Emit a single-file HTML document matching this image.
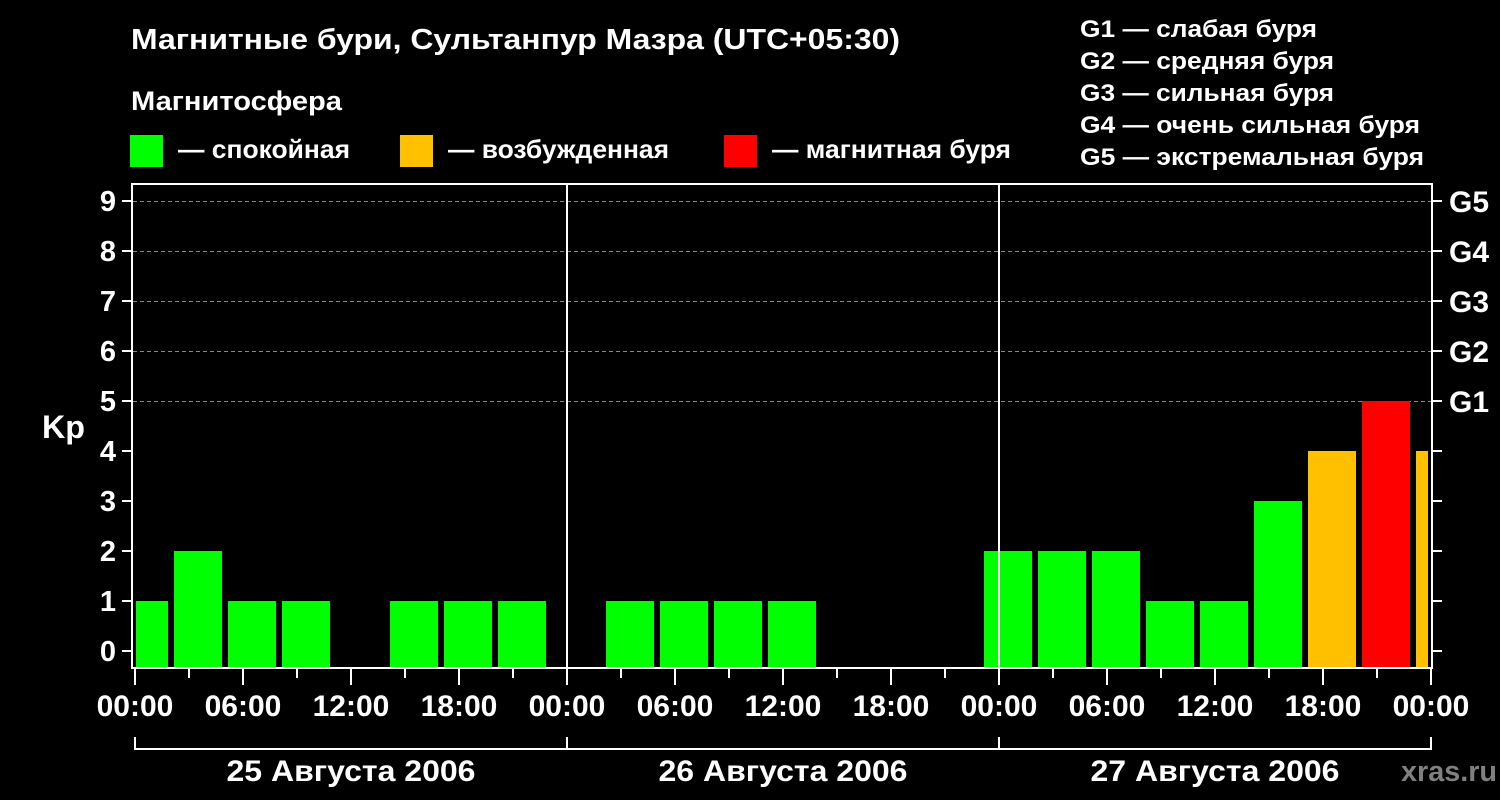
<!DOCTYPE html>
<html><head><meta charset="utf-8"><style>
html,body{margin:0;padding:0;background:#000;}
svg{display:block;}
text{font-family:"Liberation Sans",Arial,sans-serif;font-weight:bold;fill:#fff;}
</style></head><body>
<svg width="1500" height="800" viewBox="0 0 1500 800" xmlns="http://www.w3.org/2000/svg">
<rect width="1500" height="800" fill="#000"/>
<text x="131" y="49" font-size="29" textLength="769" lengthAdjust="spacingAndGlyphs">Магнитные бури, Сультанпур Мазра (UTC+05:30)</text>
<text x="131" y="110" font-size="27" textLength="211" lengthAdjust="spacingAndGlyphs">Магнитосфера</text>
<rect x="130" y="135" width="33" height="32" fill="#00ff00"/>
<text x="178" y="158" font-size="26" textLength="172" lengthAdjust="spacingAndGlyphs">— спокойная</text>
<rect x="400" y="135" width="33" height="32" fill="#ffc000"/>
<text x="448" y="158" font-size="26" textLength="221" lengthAdjust="spacingAndGlyphs">— возбужденная</text>
<rect x="724" y="135" width="33" height="32" fill="#ff0000"/>
<text x="772" y="158" font-size="26" textLength="239" lengthAdjust="spacingAndGlyphs">— магнитная буря</text>
<g font-size="24">
<text x="1080" y="37" textLength="237" lengthAdjust="spacingAndGlyphs">G1 — слабая буря</text>
<text x="1080" y="69" textLength="254" lengthAdjust="spacingAndGlyphs">G2 — средняя буря</text>
<text x="1080" y="101" textLength="254" lengthAdjust="spacingAndGlyphs">G3 — сильная буря</text>
<text x="1080" y="133" textLength="340" lengthAdjust="spacingAndGlyphs">G4 — очень сильная буря</text>
<text x="1080" y="165" textLength="344" lengthAdjust="spacingAndGlyphs">G5 — экстремальная буря</text>
</g>
<g stroke="#888" stroke-width="1" stroke-dasharray="4,3">
<line x1="133" y1="201.5" x2="1431" y2="201.5"/>
<line x1="133" y1="251.5" x2="1431" y2="251.5"/>
<line x1="133" y1="301.5" x2="1431" y2="301.5"/>
<line x1="133" y1="351.5" x2="1431" y2="351.5"/>
<line x1="133" y1="401.5" x2="1431" y2="401.5"/>
</g>
<g fill="#00ff00">
<rect x="136" y="601" width="32" height="67"/>
<rect x="174" y="551" width="48" height="117"/>
<rect x="228" y="601" width="48" height="67"/>
<rect x="282" y="601" width="48" height="67"/>
<rect x="390" y="601" width="48" height="67"/>
<rect x="444" y="601" width="48" height="67"/>
<rect x="498" y="601" width="48" height="67"/>
<rect x="606" y="601" width="48" height="67"/>
<rect x="660" y="601" width="48" height="67"/>
<rect x="714" y="601" width="48" height="67"/>
<rect x="768" y="601" width="48" height="67"/>
<rect x="984" y="551" width="48" height="117"/>
<rect x="1038" y="551" width="48" height="117"/>
<rect x="1092" y="551" width="48" height="117"/>
<rect x="1146" y="601" width="48" height="67"/>
<rect x="1200" y="601" width="48" height="67"/>
<rect x="1254" y="501" width="48" height="167"/>
</g>
<rect x="1308" y="451" width="48" height="217" fill="#ffc000"/>
<rect x="1362" y="401" width="48" height="267" fill="#ff0000"/>
<rect x="1416" y="451" width="12" height="217" fill="#ffc000"/>
<g stroke="#fff" stroke-width="2" fill="none">
<rect x="132" y="184" width="1300" height="484"/>
<line x1="567" y1="184" x2="567" y2="668"/>
<line x1="999" y1="184" x2="999" y2="668"/>
<path d="M122 201H132M122 251H132M122 301H132M122 351H132M122 401H132M122 451H132M122 501H132M122 551H132M122 601H132M122 651H132"/>
<path d="M1432 201H1442M1432 251H1442M1432 301H1442M1432 351H1442M1432 401H1442M1432 451H1442M1432 501H1442M1432 551H1442M1432 601H1442M1432 651H1442"/>
<path d="M135 668V685M189 668V678M243 668V685M297 668V678M351 668V685M405 668V678M459 668V685M513 668V678M567 668V685M621 668V678M675 668V685M729 668V678M783 668V685M837 668V678M891 668V685M945 668V678M999 668V685M1053 668V678M1107 668V685M1161 668V678M1215 668V685M1269 668V678M1323 668V685M1377 668V678M1431 668V685"/>
<path d="M135 737V749H1431V737M567 737V749M999 737V749"/>
</g>
<g font-size="29" text-anchor="end">
<text x="116" y="211">9</text><text x="116" y="261">8</text><text x="116" y="311">7</text><text x="116" y="361">6</text><text x="116" y="411">5</text><text x="116" y="461">4</text><text x="116" y="511">3</text><text x="116" y="561">2</text><text x="116" y="611">1</text><text x="116" y="661">0</text>
</g>
<text x="42" y="438" font-size="32" textLength="43" lengthAdjust="spacingAndGlyphs">Kp</text>
<g font-size="30">
<text x="1449" y="212">G5</text><text x="1449" y="262">G4</text><text x="1449" y="312">G3</text><text x="1449" y="362">G2</text><text x="1449" y="412">G1</text>
</g>
<g font-size="30" text-anchor="middle">
<text x="135" y="716">00:00</text><text x="243" y="716">06:00</text><text x="351" y="716">12:00</text><text x="459" y="716">18:00</text>
<text x="567" y="716">00:00</text><text x="675" y="716">06:00</text><text x="783" y="716">12:00</text><text x="891" y="716">18:00</text>
<text x="999" y="716">00:00</text><text x="1107" y="716">06:00</text><text x="1215" y="716">12:00</text><text x="1323" y="716">18:00</text><text x="1431" y="716">00:00</text>
</g>
<g font-size="30" text-anchor="middle">
<text x="351" y="781" textLength="249" lengthAdjust="spacingAndGlyphs">25 Августа 2006</text>
<text x="783" y="781" textLength="249" lengthAdjust="spacingAndGlyphs">26 Августа 2006</text>
<text x="1215" y="781" textLength="249" lengthAdjust="spacingAndGlyphs">27 Августа 2006</text>
</g>
<text x="1401" y="781" font-size="29" style="fill:#808080" textLength="96" lengthAdjust="spacingAndGlyphs">xras.ru</text>
</svg>
</body></html>
